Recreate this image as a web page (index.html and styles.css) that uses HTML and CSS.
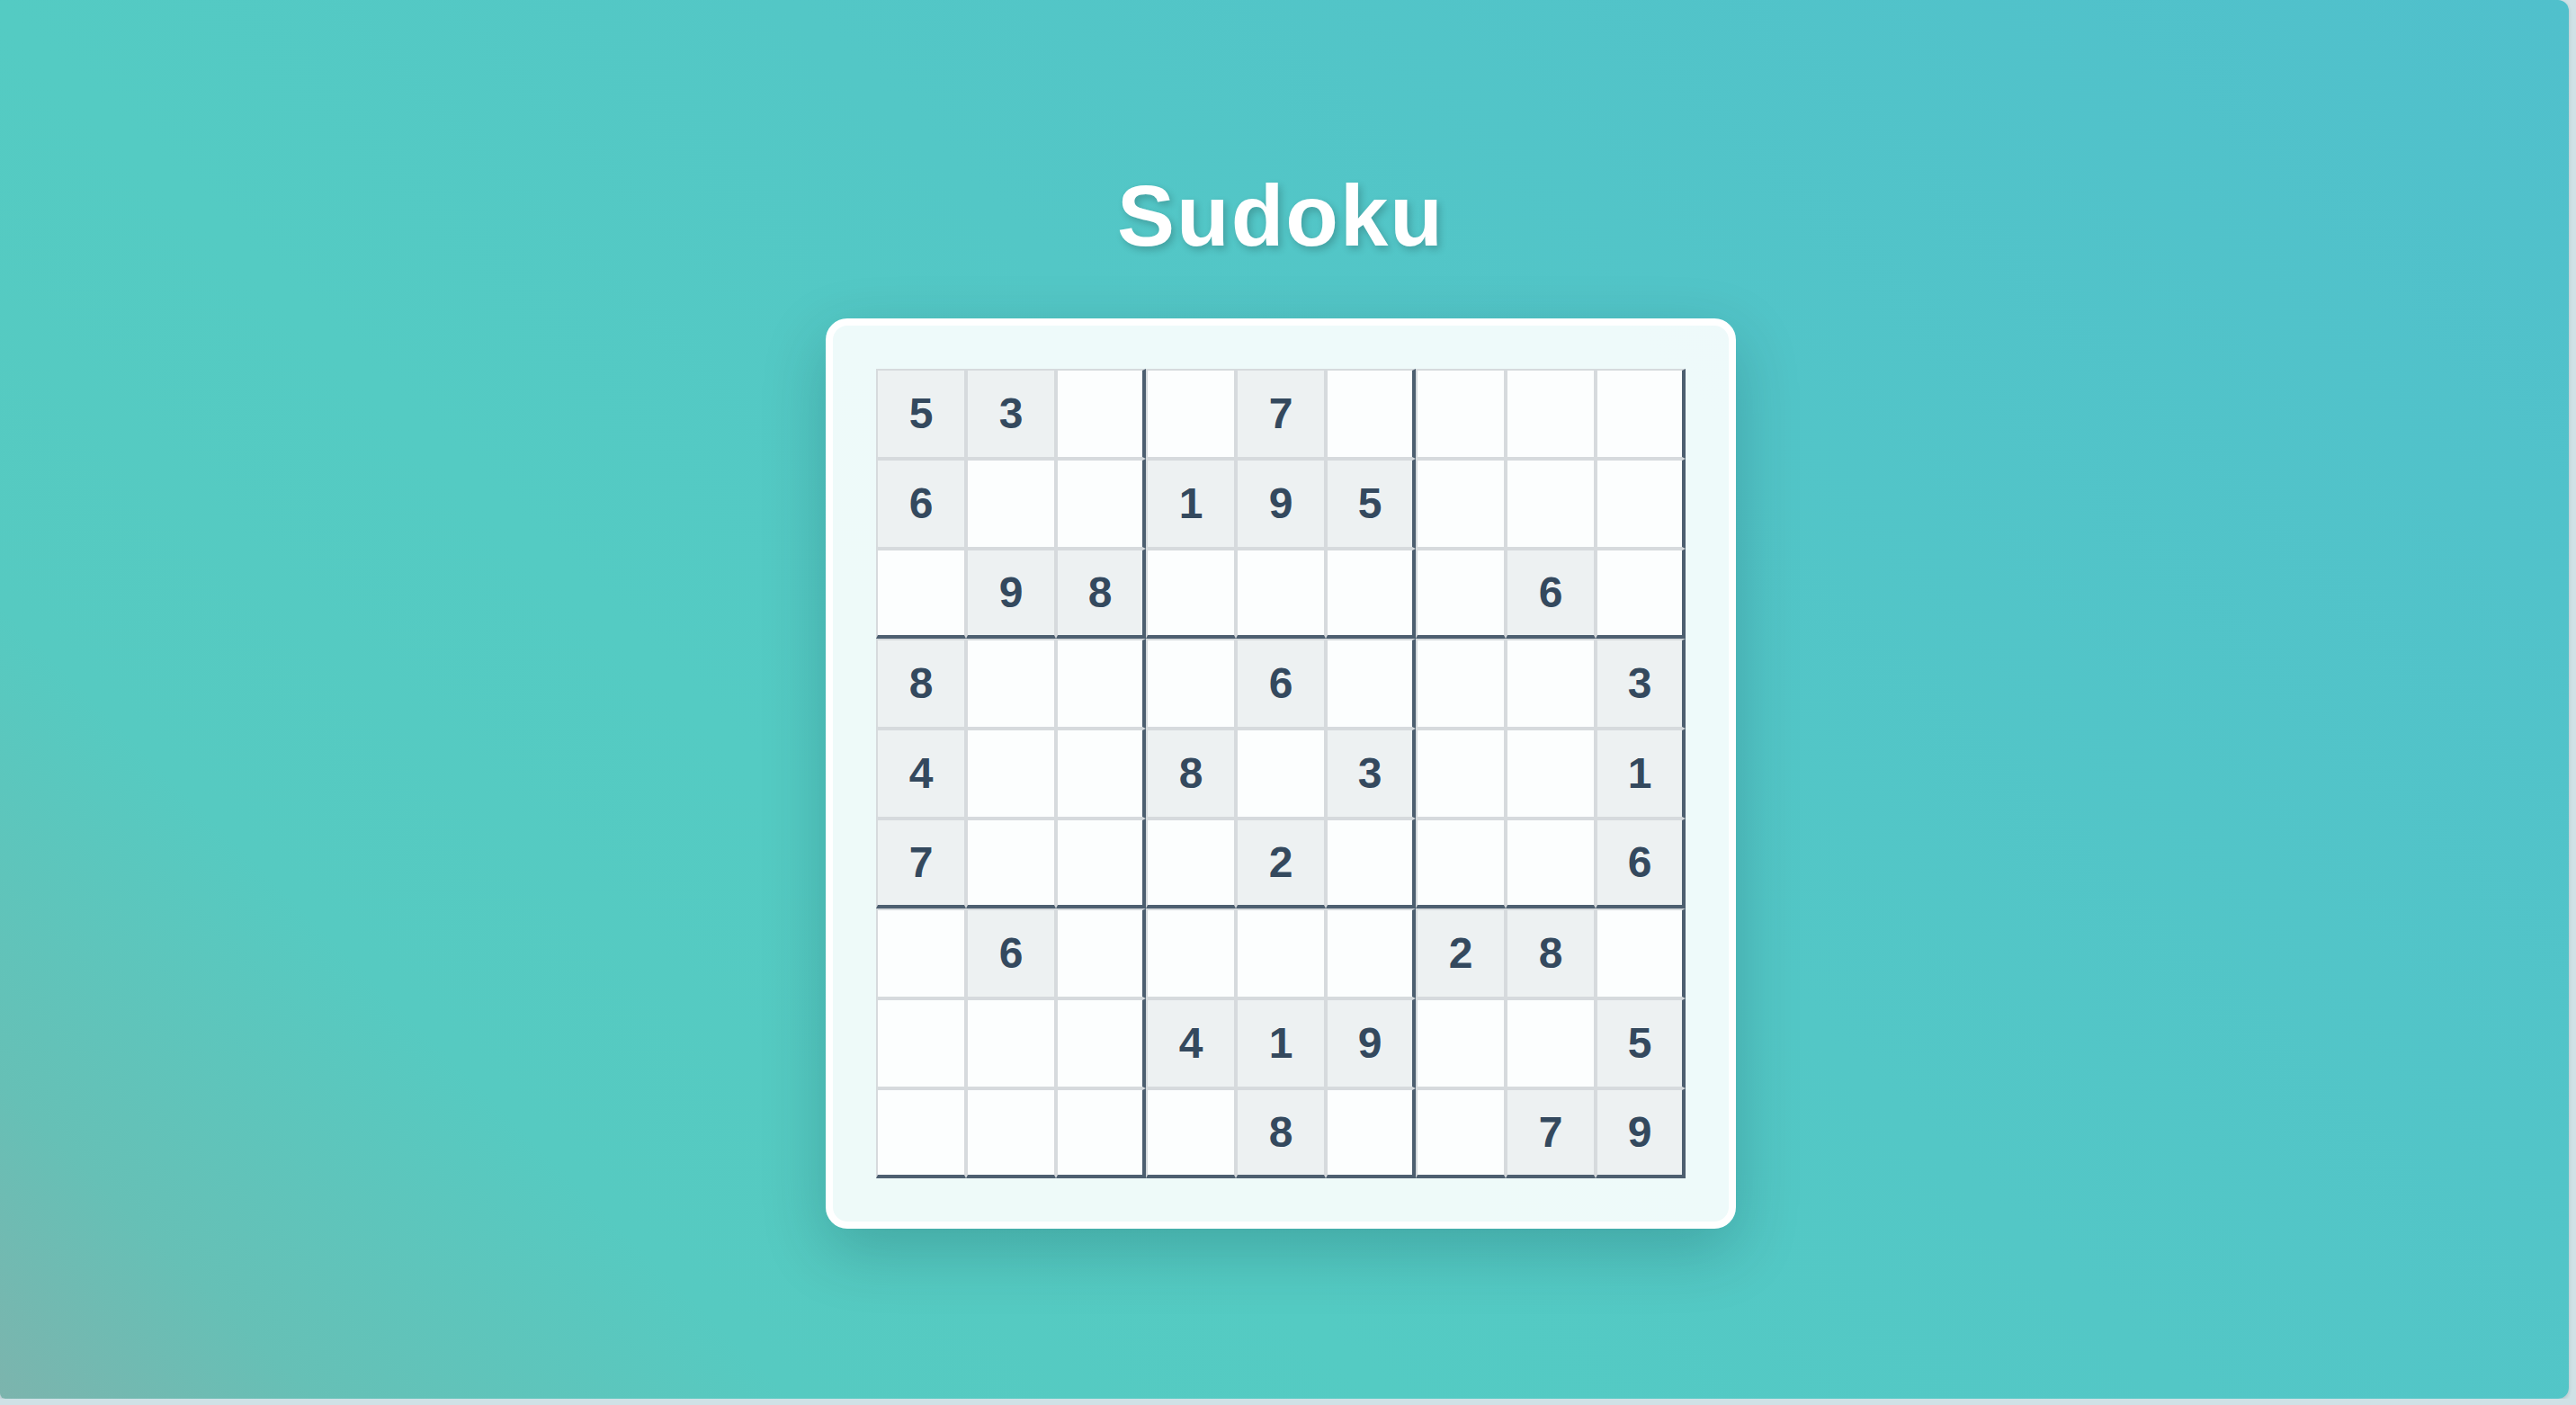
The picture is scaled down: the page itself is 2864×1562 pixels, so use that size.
FILE: index.html
```html
<!DOCTYPE html>
<html lang="en">
<head>
<meta charset="utf-8">
<title>Sudoku</title>
<link rel="stylesheet" href="styles.css">
</head>
<body>
<div class="page">
  <h1 class="title">Sudoku</h1>
  <div class="board">
    <div class="grid">
      <div class="c g">5</div><div class="c g">3</div><div class="c br"></div><div class="c"></div><div class="c g">7</div><div class="c br"></div><div class="c"></div><div class="c"></div><div class="c br"></div>
      <div class="c g">6</div><div class="c"></div><div class="c br"></div><div class="c g">1</div><div class="c g">9</div><div class="c g br">5</div><div class="c"></div><div class="c"></div><div class="c br"></div>
      <div class="c bb"></div><div class="c g bb">9</div><div class="c g br bb">8</div><div class="c bb"></div><div class="c bb"></div><div class="c br bb"></div><div class="c bb"></div><div class="c g bb">6</div><div class="c br bb"></div>
      <div class="c g">8</div><div class="c"></div><div class="c br"></div><div class="c"></div><div class="c g">6</div><div class="c br"></div><div class="c"></div><div class="c"></div><div class="c g br">3</div>
      <div class="c g">4</div><div class="c"></div><div class="c br"></div><div class="c g">8</div><div class="c"></div><div class="c g br">3</div><div class="c"></div><div class="c"></div><div class="c g br">1</div>
      <div class="c g bb">7</div><div class="c bb"></div><div class="c br bb"></div><div class="c bb"></div><div class="c g bb">2</div><div class="c br bb"></div><div class="c bb"></div><div class="c bb"></div><div class="c g br bb">6</div>
      <div class="c"></div><div class="c g">6</div><div class="c br"></div><div class="c"></div><div class="c"></div><div class="c br"></div><div class="c g">2</div><div class="c g">8</div><div class="c br"></div>
      <div class="c"></div><div class="c"></div><div class="c br"></div><div class="c g">4</div><div class="c g">1</div><div class="c g br">9</div><div class="c"></div><div class="c"></div><div class="c g br">5</div>
      <div class="c bb"></div><div class="c bb"></div><div class="c br bb"></div><div class="c bb"></div><div class="c g bb">8</div><div class="c br bb"></div><div class="c bb"></div><div class="c g bb">7</div><div class="c g br bb">9</div>
    </div>
  </div>
</div>
</body>
</html>
```
FILE: styles.css
```css
* { box-sizing: border-box; }
html { background: #cfe1e6; }
body { margin: 0; font-family: "Liberation Sans", Arial, sans-serif; }

.page {
  width: 2856px;
  height: 1555px;
  border-radius: 0 12px 12px 6px;
  box-shadow: 0 2px 4px rgba(0, 0, 0, 0.15);
  background: linear-gradient(45deg, #7cb4ad 0%, #66c0b6 8%, #56cac1 20%, #54cbc3 35%, #53c7c6 55%, #50c0cc 100%);
  display: flex;
  flex-direction: column;
  align-items: center;
  padding: 185px 8px 0 0;
  gap: 59px;
}

.title {
  margin: 0;
  font-size: 96px;
  font-weight: bold;
  letter-spacing: 2px;
  line-height: normal;
  color: #fff;
  text-shadow: 3px 4px 8px rgba(0, 0, 0, 0.2);
}

.board {
  width: 1012px;
  padding: 48px;
  border: 8px solid #fff;
  border-radius: 24px;
  background: rgba(255, 255, 255, 0.9);
  box-shadow: 0 24px 70px rgba(0, 40, 50, 0.22);
}

.grid {
  display: grid;
  grid-template-columns: repeat(9, 100px);
  grid-auto-rows: 100px;
}

.c {
  border: 2px solid #d6dadd;
  background: #fcfefe;
  display: flex;
  align-items: center;
  justify-content: center;
  padding-bottom: 2px;
  font-size: 48px;
  font-weight: bold;
  color: #34495e;
}

.g { background: #edf1f2; }
.br { border-right: 4px solid #4d5f70; }
.bb { border-bottom: 4px solid #4d5f70; }
```
